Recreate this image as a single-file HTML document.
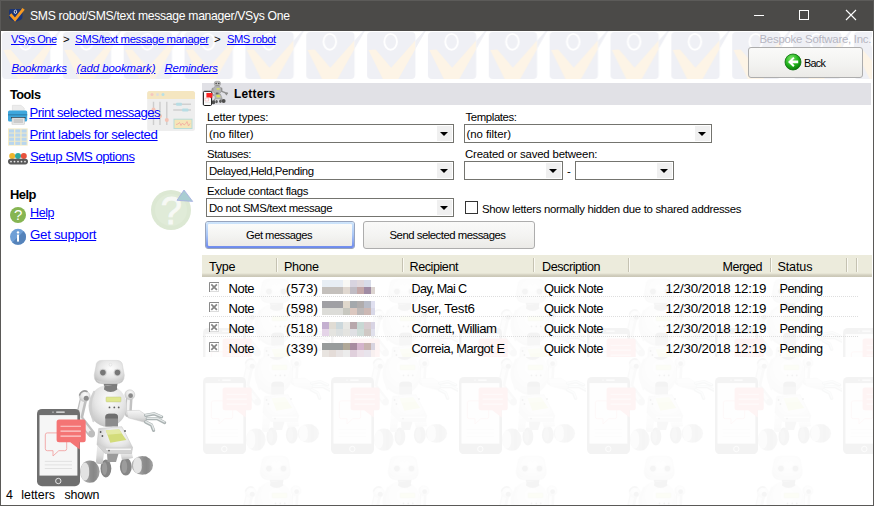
<!DOCTYPE html>
<html lang="en">
<head>
<meta charset="utf-8">
<title>SMS robot/SMS/text message manager/VSys One</title>
<style>
html,body{margin:0;padding:0;}
body{width:874px;height:506px;overflow:hidden;background:#fff;font-family:"Liberation Sans","DejaVu Sans",sans-serif;color:#000;}
#win{position:relative;width:874px;height:506px;overflow:hidden;background:#fff;}
.abs{position:absolute;}
.t{position:absolute;white-space:nowrap;line-height:16px;}
.t.u{text-decoration:underline;color:#0000ff;cursor:pointer;}
svg{position:absolute;overflow:visible;}
#titlebar{left:0;top:0;width:874px;height:31px;background:#4b4a48;border-top:1px solid #5c5b59;box-sizing:border-box;}
#bl{left:0;top:0;width:1px;height:506px;background:#5a5957;}
#br{left:873px;top:0;width:1px;height:506px;background:#5a5957;}
#bb{left:0;top:505px;width:874px;height:1px;background:#5a5957;}
.combo{position:absolute;height:18px;border:1px solid #74746f;background:#fff;box-sizing:border-box;height:19px;}
.combo b{position:absolute;right:1px;top:1px;width:15px;height:15px;background:#f0f0f0;}
.combo i{position:absolute;right:5px;top:7px;width:0;height:0;border-left:4px solid transparent;border-right:4px solid transparent;border-top:4px solid #000;}
.btn{position:absolute;border:1px solid #adadad;border-radius:3px;background:linear-gradient(#fafaf9,#f3f3f1 55%,#ebeae7);box-sizing:border-box;}
.btn.f{border-color:#98a4bd;overflow:hidden;}
.btn.f .g{position:absolute;left:0;top:0;right:0;bottom:0;background:linear-gradient(#cfe6fc,#a9c6f6 50%,#6c88ec);}
.btn.f .in{position:absolute;left:2px;top:2px;right:2px;bottom:2px;border-radius:1px;background:linear-gradient(#fbfbfa,#f3f3f1 55%,#eceae7);}
#lhead{left:202px;top:255px;width:670px;height:22px;background:linear-gradient(#ecebdc 0,#ecebdc 18px,#e0dece 19px,#d3d0c0 20px,#c9c6b5 22px);}
.sep{position:absolute;top:258px;width:1px;height:14px;background:#c5c2b2;border-right:1px solid #fbfaf3;}
.rl{position:absolute;left:203px;width:656px;height:1px;background:repeating-linear-gradient(90deg,#dedede 0,#dedede 1px,transparent 1px,transparent 2px);}
.cb{position:absolute;left:209px;width:9px;height:9px;border:1px solid;border-color:#8c8c8c #dedede #dedede #8c8c8c;background:#fff;}
</style>
</head>
<body>
<div id="win">
<svg width="0" height="0" style="left:0;top:0">
 <defs>
  <linearGradient id="gMetal" x1="0" y1="0" x2="1" y2="1">
   <stop offset="0" stop-color="#fafafa"/><stop offset="0.55" stop-color="#e2e2e2"/><stop offset="1" stop-color="#bdbdbd"/>
  </linearGradient>
  <linearGradient id="gMetal2" x1="0" y1="0" x2="1" y2="0">
   <stop offset="0" stop-color="#f2f2f2"/><stop offset="1" stop-color="#c4c4c4"/>
  </linearGradient>
  <linearGradient id="gTire" x1="0" y1="0" x2="1" y2="0">
   <stop offset="0" stop-color="#b4b4b4"/><stop offset="0.45" stop-color="#9a9a9a"/><stop offset="0.7" stop-color="#858585"/><stop offset="1" stop-color="#a2a2a2"/>
  </linearGradient>
  <radialGradient id="gBody" cx="0.55" cy="0.35" r="0.75">
   <stop offset="0" stop-color="#fdfdfd"/><stop offset="0.5" stop-color="#e6e6e6"/><stop offset="0.8" stop-color="#cccccc"/><stop offset="1" stop-color="#b2b2b2"/>
  </radialGradient>
  <linearGradient id="gMetalV" x1="0" y1="0" x2="0" y2="1">
   <stop offset="0" stop-color="#f6f6f6"/><stop offset="0.6" stop-color="#dddddd"/><stop offset="1" stop-color="#bdbdbd"/>
  </linearGradient>
  <radialGradient id="gBack" cx="0.4" cy="0.3" r="0.7">
   <stop offset="0" stop-color="#7fe86a"/><stop offset="0.6" stop-color="#22b31e"/><stop offset="1" stop-color="#0b7d0b"/>
  </radialGradient>
  <symbol id="robot" viewBox="0 0 128 128" overflow="visible">
   <!-- back wheels -->
   <ellipse cx="69.9" cy="110.5" rx="5.4" ry="8.9" fill="#848484"/>
   <ellipse cx="68.6" cy="110.5" rx="2.6" ry="6.4" fill="#9a9a9a"/>
   <ellipse cx="89.8" cy="108.7" rx="5.9" ry="8.9" fill="#868686"/>
   <ellipse cx="88.4" cy="108.7" rx="2.8" ry="6.6" fill="#9c9c9c"/>
   <!-- legs / struts -->
   <path d="M61.5 84 L60 103 Q60 106 63 106 L66.5 106 L68.5 92 Z" fill="url(#gMetalV)"/>
   <path d="M71 94 L71.5 104 L80 104 L83 94 Z" fill="#9b9b9b"/>
   <path d="M84 94 L86 102 L97 100 L95.6 93 Z" fill="url(#gMetalV)"/>
   <!-- left arm -->
   <path d="M47.3 42 L43.2 60 L54.8 75" fill="none" stroke="#bfbfbf" stroke-width="7.6" stroke-linecap="round" stroke-linejoin="round"/>
   <path d="M46.6 42 L42.6 59.6 L54 74.4" fill="none" stroke="#efefef" stroke-width="3.6" stroke-linecap="round" stroke-linejoin="round"/>
   <circle cx="55.6" cy="76" r="3.4" fill="#bdbdbd"/>
   <!-- right arm -->
   <path d="M93.2 41 L92.3 56" fill="none" stroke="#c2c2c2" stroke-width="6.6" stroke-linecap="round"/>
   <path d="M92.6 41 L91.8 55.5" fill="none" stroke="#f3f3f3" stroke-width="2.8" stroke-linecap="round"/>
   <path d="M90.6 52.6 L103.3 52.4 L111.4 57.8 L109.8 64.6 L92.2 59.8 Z" fill="url(#gMetalV)" stroke="#c6c6c6" stroke-width="0.5" stroke-linejoin="round"/>
   <path d="M109.6 57.3 L118 55.8 L125.6 58.9 M111.2 60.7 L121 60.6 L128.6 64.6 M109.6 64 L115.5 67 L117.6 72.4" fill="none" stroke="#aab2b2" stroke-width="3.2" stroke-linecap="round" stroke-linejoin="round"/>
   <path d="M109.6 57 L118 55.4 L125.4 58.4 M111.2 60.3 L121 60.1 L128.4 64 M109.8 63.6 L115.8 66.6 L117.8 71.8" fill="none" stroke="#e3e7e7" stroke-width="1.4" stroke-linecap="round" stroke-linejoin="round"/>
   <!-- neck -->
   <path d="M69.5 23 H79.8 Q81.8 23 81.6 25 L80.6 31.6 Q80.3 33.8 78 33.8 H71 Q68.8 33.8 68.5 31.6 L67.6 25 Q67.4 23 69.5 23 Z" fill="#787878"/>
   <!-- torso -->
   <ellipse cx="71.6" cy="48" rx="19" ry="20.8" fill="url(#gBody)"/>
   <path d="M58 34 Q51.5 47 57.5 63" fill="none" stroke="#cdcdcd" stroke-width="2.2" stroke-linecap="round" opacity="0.8"/>
   <path d="M68 31.5 Q74.5 36.5 81.3 31.5 L80.6 27.5 H68.6 Z" fill="#7d7d7d"/>
   <circle cx="48.7" cy="38.3" r="5.4" fill="url(#gBody)" stroke="#c4c4c4" stroke-width="0.5"/>
   <circle cx="50.2" cy="40.2" r="2.5" fill="#8a8a8a"/>
   <path d="M43.6 37 A5.4 5.4 0 0 1 51 33.4" fill="none" stroke="#9c9c9c" stroke-width="1.6" stroke-linecap="round"/>
   <circle cx="93.8" cy="36.8" r="5" fill="url(#gBody)" stroke="#c4c4c4" stroke-width="0.5"/>
   <circle cx="94.6" cy="37.7" r="2.4" fill="#8a8a8a"/>
   <rect x="70" y="39" width="15" height="4.9" rx="0.8" fill="#dfe78e" stroke="#c3c987" stroke-width="0.5"/>
   <circle cx="73.5" cy="49.4" r="0.9" fill="#5c5c5c"/><circle cx="78.3" cy="49.4" r="0.9" fill="#5c5c5c"/><circle cx="82.7" cy="49.4" r="0.9" fill="#5c5c5c"/>
   <path d="M69.3 59.5 Q69.3 55.8 73 55.8 H78.6 Q82 55.8 82 59.5 V68.4 H69.3 Z" fill="#8c8c8c"/>
   <path d="M69.3 59.5 Q69.3 55.8 73 55.8 H78.6 Q82 55.8 82 59.5 V60.5 H69.3 Z" fill="#6f6f6f"/>
   <!-- pelvis -->
   <path d="M62.7 70.5 L85.9 68.7 L96.5 89.2 L95.6 95.4 L69 95.4 L61 86.5 Z" fill="url(#gBody)" stroke="#c2c2c2" stroke-width="0.5" stroke-linejoin="round"/>
   <path d="M69.8 72.2 L83.2 71.4 L90.3 82 L74.3 84.7 Z" fill="#d3dc7a"/>
   <path d="M69.8 72.2 L83.2 71.4 L86 75.6 L71.4 76.8 Z" fill="#e4eaa4"/>
   <path d="M61 86.5 L69 95.4 L95.6 95.4 L96.5 89.2 L72 89.6 Z" fill="#d2d2d2"/>
   <path d="M70 91.3 H95" stroke="#f6f6f6" stroke-width="1.4"/>
   <circle cx="64.6" cy="74" r="0.9" fill="#555"/><circle cx="66.4" cy="78" r="0.9" fill="#555"/><circle cx="89" cy="73" r="0.9" fill="#555"/><circle cx="73" cy="92.6" r="0.9" fill="#666"/>
   <!-- head -->
   <path d="M60 8 Q60 2.4 66 2.4 H80.5 Q86.5 2.4 86.6 8 L88.3 17 Q88.6 25.7 80 25.7 H66.5 Q57.9 25.7 58.2 17 Z" fill="url(#gBody)" stroke="#cfcfcf" stroke-width="0.5"/>
   <path d="M60.2 21.5 Q62 25.2 66.5 25.4 H80 Q84.5 25.2 86.3 21.5 Q82 23.6 73.2 23.6 Q64.5 23.6 60.2 21.5 Z" fill="#cfcfcf"/>
   <circle cx="66.9" cy="14.6" r="3.9" fill="#d4d4d4"/>
   <circle cx="81.5" cy="14.6" r="3.9" fill="#d4d4d4"/>
   <circle cx="66.9" cy="14.6" r="2.8" fill="#767676"/>
   <circle cx="81.5" cy="14.6" r="2.8" fill="#767676"/>
   <circle cx="74.5" cy="6.7" r="1.4" fill="#f6f6f6" stroke="#d6d6d6" stroke-width="0.5"/>
   <!-- front wheels -->
   <ellipse cx="106.3" cy="107.3" rx="10.7" ry="9.4" fill="url(#gTire)"/>
   <ellipse cx="101.6" cy="107.3" rx="4.6" ry="8" fill="#e4e4e4"/>
   <ellipse cx="109.5" cy="107.3" rx="4" ry="9.2" fill="#8a8a8a" opacity="0.55"/>
   <ellipse cx="53.8" cy="113.6" rx="9.8" ry="11.1" fill="url(#gTire)"/>
   <ellipse cx="49" cy="113.6" rx="4.4" ry="9" fill="#e2e2e2"/>
   <ellipse cx="57" cy="113.6" rx="3.8" ry="10.8" fill="#8a8a8a" opacity="0.55"/>
   <!-- phone -->
   <rect x="1" y="50.9" width="43" height="77.4" rx="5" fill="#6f6f6f"/>
   <rect x="3.5" y="57.1" width="37.9" height="60.5" fill="#f6f6f6"/>
   <rect x="20" y="53.4" width="8.9" height="1.4" rx="0.7" fill="#f0f0f0"/>
   <circle cx="17" cy="54.1" r="0.7" fill="#f0f0f0"/>
   <circle cx="22.3" cy="123" r="2.7" fill="none" stroke="#f0f0f0" stroke-width="0.9"/>
   <path d="M8.8 103.4H36M8.8 106.9H36M8.8 110.5H36" stroke="#dcdcdc" stroke-width="0.8"/>
   <path d="M11.3 74.9 H28.7 Q30.7 74.9 30.7 76.9 V90.7 Q30.7 92.7 28.7 92.7 H22.8 L17 98 V92.7 H11.3 Q9.3 92.7 9.3 90.7 V76.9 Q9.3 74.9 11.3 74.9 Z" fill="none" stroke="#f2a4a4" stroke-width="0.9"/>
   <path d="M23.1 61.6 H47.2 Q49.7 61.6 49.7 64.1 V81.8 Q49.7 84.3 47.2 84.3 H43.7 V91.5 L34.3 84.3 H23.1 Q20.6 84.3 20.6 81.8 V64.1 Q20.6 61.6 23.1 61.6 Z" fill="#f47474"/>
   <path d="M24.5 68.3H44.9M24.5 73.1H44.9M24.5 78.1H44.9" stroke="#fbd0d0" stroke-width="1.1"/>
  </symbol>
  <pattern id="wmRows" x="202" y="277" width="128" height="128" patternUnits="userSpaceOnUse">
   <use href="#robot" x="0" y="0" width="128" height="128"/>
  </pattern>
  <pattern id="wmBelow" x="202" y="326" width="128" height="128" patternUnits="userSpaceOnUse">
   <use href="#robot" x="0" y="0" width="128" height="128"/>
  </pattern>
  <pattern id="wmTop" x="2" y="31" width="60.85" height="60" patternUnits="userSpaceOnUse">
   <rect x="0" y="1" width="48.3" height="47" rx="4" fill="#eff0f5"/>
   <path d="M1.4 19.1 L8.6 18.6 L24.1 36.8 L47.9 9.7 L48.3 9.7 L48.3 18 L31.3 48 L15.8 48 Z" fill="#fdf4e6"/>
   <path d="M48.3 9.7 L55.9 1 L56.8 0 L58.6 0 L58 1 L48.3 18 Z" fill="#eff0f5"/>
   <ellipse cx="23.6" cy="10.8" rx="6.3" ry="7.9" fill="none" stroke="#ffffff" stroke-width="1.9"/>
  </pattern>
 </defs>
</svg>
<!-- header watermark band -->
<svg width="874" height="506" style="left:0;top:0" viewBox="0 0 874 506">
 <rect x="1" y="31" width="871" height="49" fill="url(#wmTop)"/>
 <!-- list watermark -->
 <g opacity="0.075">
  <rect x="202" y="277" width="671" height="80" fill="url(#wmRows)"/>
  <rect x="202" y="357" width="671" height="148" fill="url(#wmBelow)"/>
 </g>
 <!-- big robot -->
 <use href="#robot" x="36" y="358" width="128" height="128"/>
</svg>

<div class="abs" id="titlebar"></div>
<div class="abs" id="bl"></div><div class="abs" id="br"></div><div class="abs" id="bb"></div>

<!-- title icon + window controls -->
<svg width="874" height="31" style="left:0;top:0" viewBox="0 0 874 31">
 <path d="M11 9 H20.5 Q22.5 9 22.5 11 V17 Q22.5 19 20.5 20 L16.5 21.4 H15 L11 20 Q9 19 9 17 V11 Q9 9 11 9 Z" fill="#1b3575"/>
 <path d="M10.3 14.2 L15 19.6 L23.6 8.8" fill="none" stroke="#f59a23" stroke-width="2.9"/>
 <ellipse cx="15.4" cy="11.8" rx="1.2" ry="1.7" fill="none" stroke="#fff" stroke-width="0.8"/>
 <rect x="754" y="15" width="10" height="1" fill="#fff"/>
 <rect x="799.5" y="10.5" width="9" height="9" fill="none" stroke="#fff" stroke-width="1"/>
 <path d="M846 10 L856 20 M856 10 L846 20" stroke="#fff" stroke-width="1.1"/>
</svg>

<!-- back button -->
<div class="btn" style="left:748px;top:47px;width:115px;height:31px;"></div>
<svg width="20" height="20" style="left:783px;top:52px" viewBox="0 0 20 20">
 <circle cx="10" cy="10" r="8" fill="url(#gBack)" stroke="#0a6d0a" stroke-width="0.8"/>
 <path d="M5 9.9 L10.2 4.9 L11.6 6.3 L9.4 8.6 H15.2 V11.2 H9.4 L11.6 13.5 L10.2 14.9 Z" fill="#fff"/>
</svg>

<!-- left panel icons -->
<svg width="210" height="260" style="left:0;top:0" viewBox="0 0 210 260">
 <!-- printer -->
 <path d="M12.4 105.3 H21 L24.2 108 V112.3 H12.4 Z" fill="#ececec" stroke="#d6d6d6" stroke-width="0.5"/>
 <rect x="8" y="110.5" width="19.2" height="11" rx="1.5" fill="#3fa7dd"/>
 <rect x="8" y="114.2" width="19.2" height="1.2" fill="#2f7fae"/>
 <rect x="11" y="117" width="14.6" height="1.6" fill="#2c4658"/>
 <rect x="12" y="118" width="12.6" height="6.2" fill="#e9e9e9" stroke="#bdbdbd" stroke-width="0.5"/>
 <path d="M13.5 120H23M13.5 122H23" stroke="#9a9a9a" stroke-width="0.7"/>
 <!-- labels -->
 <rect x="8" y="128.4" width="19.7" height="17.2" fill="#f4ebc6"/>
 <g fill="#b9d6ee">
  <rect x="9" y="129.4" width="5" height="3.2"/><rect x="15.3" y="129.4" width="5" height="3.2"/><rect x="21.6" y="129.4" width="5" height="3.2"/>
  <rect x="9" y="133.5" width="5" height="3.2"/><rect x="15.3" y="133.5" width="5" height="3.2"/><rect x="21.6" y="133.5" width="5" height="3.2"/>
  <rect x="9" y="137.6" width="5" height="3.2"/><rect x="15.3" y="137.6" width="5" height="3.2"/><rect x="21.6" y="137.6" width="5" height="3.2"/>
  <rect x="9" y="141.7" width="5" height="3.2"/><rect x="15.3" y="141.7" width="5" height="3.2"/><rect x="21.6" y="141.7" width="5" height="3.2"/>
 </g>
 <!-- sms options -->
 <circle cx="12.2" cy="156" r="3" fill="#efb52c"/><circle cx="18" cy="156" r="3" fill="#2fa8a1"/><circle cx="23.8" cy="156" r="3" fill="#e8523c"/>
 <rect x="8" y="158.8" width="20" height="5.6" rx="2.8" fill="#5a5a5a"/>
 <g fill="#e8e8e8"><circle cx="11" cy="161.6" r="0.9"/><circle cx="14.5" cy="161.6" r="0.9"/><circle cx="18" cy="161.6" r="0.9"/><circle cx="21.5" cy="161.6" r="0.9"/><circle cx="25" cy="161.6" r="0.9"/></g>
 <!-- help -->
 <circle cx="18" cy="215" r="8" fill="#86b552"/>
 <text x="18.2" y="220.4" text-anchor="middle" font-family="Liberation Sans, sans-serif" font-size="15" fill="#fff">?</text>
 <!-- info -->
 <circle cx="18" cy="236.8" r="8" fill="#6f9fd6"/>
 <path d="M23.66 231.14 A8 8 0 0 1 12.34 242.46 Z" fill="#5583ba"/>
 <circle cx="18" cy="232.4" r="1.2" fill="#fff"/>
 <rect x="17" y="234.6" width="2" height="7" fill="#fff"/>
 <!-- faded tools image -->
 <g>
  <rect x="147.2" y="90.9" width="47.8" height="40.1" rx="2.5" fill="#eeeeee"/>
  <path d="M147.2 99 V93.4 Q147.2 90.9 149.7 90.9 H192.5 Q195 90.9 195 93.4 V99 Z" fill="#f5e6c0"/>
  <circle cx="152" cy="94.6" r="1.5" fill="#f5c6c0"/><circle cx="157.5" cy="94.6" r="1.5" fill="#dedede"/><circle cx="163" cy="94.6" r="1.5" fill="#b8e0e6"/>
  <path d="M153.5 101.7V125M160 101.7V125M166.8 101.7V125" stroke="#cdcdcd" stroke-width="1.4"/>
  <circle cx="153.5" cy="109.5" r="2" fill="#f5c3b5"/><circle cx="160" cy="116" r="2" fill="#f5c3b5"/><circle cx="166.8" cy="120" r="2" fill="#f5c3b5"/>
  <path d="M173.2 104.2H191M173.2 110H191" stroke="#d0d0d0" stroke-width="1.4"/>
  <rect x="176" y="102.7" width="6" height="3" rx="1" fill="#b8dde4"/><rect x="182" y="108.5" width="6.5" height="3" rx="1" fill="#b8dde4"/>
  <rect x="174" y="119.2" width="18" height="9.3" fill="#f5e6b8" stroke="#b8dcd8" stroke-width="1"/>
  <path d="M176 124.5 L178 124 L179.5 122.5 L181 125.5 L182.5 123 L184 125 L185.5 124 L187 121.5 L188.5 126 L190 123.5" fill="none" stroke="#f2a8a0" stroke-width="0.8"/>
 </g>
 <!-- faded help image -->
 <circle cx="171" cy="210" r="20" fill="#dce8d3"/>
 <circle cx="171" cy="210" r="16" fill="#e0ebd8"/>
 <text x="171.2" y="223.8" text-anchor="middle" font-family="Liberation Sans, sans-serif" font-size="38" fill="#f7f9f5" stroke="#f7f9f5" stroke-width="0.8">?</text>
 <path d="M184 190 L177 200.3 L192.7 201.4 Z" fill="#a9cdd2" stroke="#a3abe2" stroke-width="0.8"/>
</svg>

<!-- Letters band -->
<div class="abs" style="left:202px;top:83px;width:669px;height:22px;background:#e1e1e6;"></div>
<svg width="28" height="26" style="left:202px;top:80px" viewBox="202 80 28 26">
 <!-- small robot icon -->
 <rect x="214.3" y="81.3" width="6.2" height="4.6" rx="1.8" fill="#bdbdbd" stroke="#8e8e8e" stroke-width="0.5"/>
 <circle cx="216.1" cy="83.6" r="0.75" fill="#3c3c3c"/><circle cx="218.8" cy="83.6" r="0.75" fill="#3c3c3c"/>
 <rect x="216.3" y="85.6" width="2.4" height="1.6" fill="#5c5c5c"/>
 <ellipse cx="217.2" cy="90" rx="4.3" ry="4.2" fill="#b4b4b4" stroke="#8c8c8c" stroke-width="0.5"/>
 <rect x="216.6" y="88.2" width="3" height="1.4" fill="#d9e25e"/>
 <path d="M212.6 88.4 L211.6 92.6 L213.4 95.4" fill="none" stroke="#9a9a9a" stroke-width="1.5" stroke-linecap="round"/>
 <path d="M221.6 88.2 L221.8 91.4 L225 92.6 L227.4 93.2 M225 92.6 L226.6 94.6" fill="none" stroke="#8f8f8f" stroke-width="1.4" stroke-linecap="round" stroke-linejoin="round"/>
 <rect x="215.9" y="92.6" width="2.6" height="2.4" fill="#5a5a5a"/>
 <path d="M214.4 94.4 L220.4 94 L222.2 98.6 L215.4 99 Z" fill="#b7b7b7" stroke="#8c8c8c" stroke-width="0.5"/>
 <path d="M216 95 L219.4 94.8 L220.6 97 L217 97.4 Z" fill="#d5de5a"/>
 <path d="M214.8 98.8 L214.2 101 M221 98.6 L222 100.4" stroke="#9c9c9c" stroke-width="1.4"/>
 <ellipse cx="213.4" cy="102.2" rx="1.9" ry="2" fill="#4e4e4e"/>
 <ellipse cx="216.6" cy="101.6" rx="1.2" ry="1.7" fill="#5a5a5a"/>
 <ellipse cx="220.4" cy="101.3" rx="1.3" ry="1.7" fill="#5a5a5a"/>
 <ellipse cx="223.6" cy="101" rx="2" ry="1.9" fill="#4e4e4e"/>
 <rect x="203.4" y="91.3" width="8.2" height="14.2" rx="1.3" fill="#fbfbfb" stroke="#161616" stroke-width="1"/>
 <path d="M205 98.2 H208.6 V101 H205 Z" fill="none" stroke="#f3a5a5" stroke-width="0.5"/>
 <path d="M205 102.6 H210" stroke="#d8d8d8" stroke-width="0.5"/>
 <path d="M206.4 93 H212.4 V97.4 H211.4 V98.6 L209.8 97.4 H206.4 Z" fill="#fb2424"/>
</svg>

<!-- combos -->
<div class="combo" style="left:206px;top:124px;width:248px;"><b></b><i></i></div>
<div class="combo" style="left:464px;top:124px;width:248px;"><b></b><i></i></div>
<div class="combo" style="left:206px;top:161px;width:248px;"><b></b><i></i></div>
<div class="combo" style="left:464px;top:161px;width:99px;"><b></b><i></i></div>
<div class="combo" style="left:575px;top:161px;width:99px;"><b></b><i></i></div>
<div class="combo" style="left:206px;top:198px;width:248px;"><b></b><i></i></div>
<div class="abs" style="left:465px;top:201px;width:13px;height:13px;border:1px solid #333;background:#fff;box-sizing:border-box;"></div>

<!-- buttons -->
<div class="btn f" style="left:205px;top:221px;width:150px;height:28px;"><div class="g"></div><div class="in"></div></div>
<div class="btn" style="left:363px;top:221px;width:172px;height:28px;"></div>

<!-- list header -->
<div class="abs" id="lhead"></div>
<div class="sep" style="left:276px;"></div>
<div class="sep" style="left:402px;"></div>
<div class="sep" style="left:533px;"></div>
<div class="sep" style="left:628px;"></div>
<div class="sep" style="left:770px;"></div>
<div class="sep" style="left:846px;"></div>
<div class="sep" style="left:856px;"></div>

<!-- row lines -->
<div class="rl" style="top:296px;"></div>
<div class="rl" style="top:316px;"></div>
<div class="rl" style="top:336px;"></div>

<!-- row check icons -->
<svg width="20" height="90" style="left:205px;top:277px" viewBox="205 277 20 90">
 <g id="cbx">
  <rect x="209.5" y="282.5" width="9" height="9" fill="#fff" stroke="#dcdcdc" stroke-width="1"/>
  <path d="M209.5 292 V282.5 H219" fill="none" stroke="#8a8a8a" stroke-width="1"/>
  <path d="M211.3 284.3 L216.9 289.9 M216.9 284.3 L211.3 289.9" stroke="#858585" stroke-width="1.7"/>
 </g>
 <use href="#cbx" y="20"/><use href="#cbx" y="40"/><use href="#cbx" y="60"/>
</svg>

<!-- redacted mosaic -->
<svg width="60" height="90" style="left:320px;top:277px" viewBox="320 277 60 90" shape-rendering="crispEdges">
<rect x="322" y="280" width="7" height="7" fill="#e8eef4"/><rect x="322" y="287" width="7" height="7" fill="#c4c0bc"/>
<rect x="329" y="280" width="7" height="7" fill="#e8eef4"/><rect x="329" y="287" width="7" height="7" fill="#c4c0bc"/>
<rect x="336" y="280" width="7" height="7" fill="#e8eef4"/><rect x="336" y="287" width="7" height="7" fill="#c4c0bc"/>
<rect x="343" y="280" width="7" height="7" fill="#f8f8f4"/><rect x="343" y="287" width="7" height="7" fill="#e0d8d0"/>
<rect x="350" y="280" width="7" height="7" fill="#d8d4e0"/><rect x="350" y="287" width="7" height="7" fill="#c0bcc4"/>
<rect x="357" y="280" width="7" height="7" fill="#e0d8dc"/><rect x="357" y="287" width="7" height="7" fill="#c4a8a8"/>
<rect x="364" y="280" width="7" height="7" fill="#d8dce8"/><rect x="364" y="287" width="7" height="7" fill="#a08ca4"/>
<rect x="371" y="280" width="3.6" height="7" fill="#ffffff"/><rect x="371" y="287" width="3.6" height="7" fill="#dcd4d0"/>
<rect x="322" y="301" width="7" height="7" fill="#a0a0a4"/><rect x="322" y="308" width="7" height="7" fill="#dcdcd8"/>
<rect x="329" y="301" width="7" height="7" fill="#a0a0a4"/><rect x="329" y="308" width="7" height="7" fill="#dcdcd8"/>
<rect x="336" y="301" width="7" height="7" fill="#a0a0a4"/><rect x="336" y="308" width="7" height="7" fill="#dcdcd8"/>
<rect x="343" y="301" width="7" height="7" fill="#e0d8cc"/><rect x="343" y="308" width="7" height="7" fill="#c8c8c0"/>
<rect x="350" y="301" width="7" height="7" fill="#a4a8ac"/><rect x="350" y="308" width="7" height="7" fill="#dcc8c0"/>
<rect x="357" y="301" width="7" height="7" fill="#b0acac"/><rect x="357" y="308" width="7" height="7" fill="#bcb8b8"/>
<rect x="364" y="301" width="7" height="7" fill="#b8bcc8"/><rect x="364" y="308" width="7" height="7" fill="#ccb8b4"/>
<rect x="371" y="301" width="3.6" height="7" fill="#e0e0f0"/><rect x="371" y="308" width="3.6" height="7" fill="#d8d8e8"/>
<rect x="322" y="322" width="7" height="7" fill="#c4b0d0"/><rect x="322" y="329" width="7" height="7" fill="#e4d4e8"/>
<rect x="329" y="322" width="7" height="7" fill="#e0dcd4"/><rect x="329" y="329" width="7" height="7" fill="#e4e4e0"/>
<rect x="336" y="322" width="7" height="7" fill="#ccd8dc"/><rect x="336" y="329" width="7" height="7" fill="#dce0e0"/>
<rect x="343" y="322" width="7" height="7" fill="#e8e8e4"/><rect x="343" y="329" width="7" height="7" fill="#e4e4e0"/>
<rect x="350" y="322" width="7" height="7" fill="#b8a8ac"/><rect x="350" y="329" width="7" height="7" fill="#e0e0e4"/>
<rect x="357" y="322" width="7" height="7" fill="#c8d8d4"/><rect x="357" y="329" width="7" height="7" fill="#d0dcd8"/>
<rect x="364" y="322" width="7" height="7" fill="#d8ccd0"/><rect x="364" y="329" width="7" height="7" fill="#d0c8c4"/>
<rect x="371" y="322" width="3.6" height="7" fill="#d8d4e4"/><rect x="371" y="329" width="3.6" height="7" fill="#e0e0ec"/>
<rect x="322" y="343" width="7" height="7" fill="#989c9c"/><rect x="322" y="350" width="7" height="7" fill="#e8e4e0"/>
<rect x="329" y="343" width="7" height="7" fill="#989c9c"/><rect x="329" y="350" width="7" height="7" fill="#e4dcd8"/>
<rect x="336" y="343" width="7" height="7" fill="#989c9c"/><rect x="336" y="350" width="7" height="7" fill="#e8e4e4"/>
<rect x="343" y="343" width="7" height="7" fill="#b0a898"/><rect x="343" y="350" width="7" height="7" fill="#ececec"/>
<rect x="350" y="343" width="7" height="7" fill="#a88ca0"/><rect x="350" y="350" width="7" height="7" fill="#e0d0dc"/>
<rect x="357" y="343" width="7" height="7" fill="#d4b4cc"/><rect x="357" y="350" width="7" height="7" fill="#ece0e8"/>
<rect x="364" y="343" width="7" height="7" fill="#c8b4b0"/><rect x="364" y="350" width="7" height="7" fill="#e8e4ec"/>
<rect x="371" y="343" width="3.6" height="7" fill="#d8d4e0"/><rect x="371" y="350" width="3.6" height="7" fill="#f8f0f0"/>
</svg>
<div class="t" id="title" style="left:30.0px;top:8px;line-height:16px;font-size:12.2px;letter-spacing:-0.309px;color:#fff;">SMS robot/SMS/text message manager/VSys One</div>
<div class="t u" id="c1" style="left:11.0px;top:32px;line-height:14px;font-size:11.0px;letter-spacing:-0.504px;">VSys One</div>
<div class="t" id="c1g" style="left:63.0px;top:32px;line-height:14px;font-size:11.4px;letter-spacing:0.000px;">&gt;</div>
<div class="t u" id="c2" style="left:75.0px;top:32px;line-height:14px;font-size:11.4px;letter-spacing:-0.423px;">SMS/text message manager</div>
<div class="t" id="c2g" style="left:214.0px;top:32px;line-height:14px;font-size:11.4px;letter-spacing:0.000px;">&gt;</div>
<div class="t u" id="c3" style="left:227.0px;top:32px;line-height:14px;font-size:11.23px;letter-spacing:-0.500px;">SMS robot</div>
<div class="t" id="bsp" style="left:759.5px;top:32px;line-height:14px;font-size:11.4px;letter-spacing:-0.245px;color:#b6b6c2;">Bespoke Software, Inc.</div>
<div class="t u" id="b1" style="left:11.5px;top:61px;line-height:14px;font-size:11.4px;letter-spacing:-0.186px;font-style:italic;">Bookmarks</div>
<div class="t u" id="b2" style="left:76.5px;top:61px;line-height:14px;font-size:11.4px;letter-spacing:-0.060px;font-style:italic;">(add bookmark)</div>
<div class="t u" id="b3" style="left:164.5px;top:61px;line-height:14px;font-size:11.4px;letter-spacing:-0.197px;font-style:italic;">Reminders</div>
<div class="t" id="back" style="left:804.0px;top:56px;line-height:14px;font-size:10.77px;letter-spacing:-0.713px;">Back</div>
<div class="t" id="hTools" style="left:10.0px;top:86px;line-height:17px;font-size:12.73px;letter-spacing:-0.496px;font-weight:bold;">Tools</div>
<div class="t u" id="l1" style="left:29.5px;top:104px;line-height:17px;font-size:13.04px;letter-spacing:-0.499px;">Print selected messages</div>
<div class="t u" id="l2" style="left:29.5px;top:126px;line-height:17px;font-size:13.3px;letter-spacing:-0.405px;">Print labels for selected</div>
<div class="t u" id="l3" style="left:30.0px;top:148px;line-height:17px;font-size:13.2px;letter-spacing:-0.494px;">Setup SMS options</div>
<div class="t" id="hHelp" style="left:10.0px;top:186px;line-height:17px;font-size:12.92px;letter-spacing:-0.490px;font-weight:bold;">Help</div>
<div class="t u" id="l4" style="left:30.0px;top:205px;line-height:16px;font-size:12.64px;letter-spacing:-0.490px;">Help</div>
<div class="t u" id="l5" style="left:30.0px;top:226px;line-height:17px;font-size:13.3px;letter-spacing:-0.298px;">Get support</div>
<div class="t" id="letters" style="left:234.0px;top:86px;line-height:16px;font-size:11.9px;letter-spacing:0.224px;font-weight:bold;">Letters</div>
<div class="t" id="f1" style="left:207.0px;top:110px;line-height:14px;font-size:11.4px;letter-spacing:-0.099px;">Letter types:</div>
<div class="t" id="v1" style="left:209.0px;top:127px;line-height:14px;font-size:11.4px;letter-spacing:-0.045px;">(no filter)</div>
<div class="t" id="f2" style="left:465.5px;top:110px;line-height:14px;font-size:11.4px;letter-spacing:-0.398px;">Templates:</div>
<div class="t" id="v2" style="left:466.5px;top:127px;line-height:14px;font-size:11.4px;letter-spacing:-0.045px;">(no filter)</div>
<div class="t" id="f3" style="left:207.0px;top:147px;line-height:14px;font-size:11.4px;letter-spacing:-0.375px;">Statuses:</div>
<div class="t" id="v3" style="left:209.0px;top:164px;line-height:14px;font-size:11.4px;letter-spacing:-0.440px;">Delayed,Held,Pending</div>
<div class="t" id="f4" style="left:465.0px;top:147px;line-height:14px;font-size:11.4px;letter-spacing:-0.178px;">Created or saved between:</div>
<div class="t" id="dash" style="left:567.0px;top:164px;line-height:14px;font-size:11.4px;letter-spacing:0.000px;">-</div>
<div class="t" id="f5" style="left:207.0px;top:184px;line-height:14px;font-size:11.4px;letter-spacing:-0.307px;">Exclude contact flags</div>
<div class="t" id="v5" style="left:209.0px;top:201px;line-height:14px;font-size:11.4px;letter-spacing:-0.401px;">Do not SMS/text message</div>
<div class="t" id="chk" style="left:482.0px;top:202px;line-height:14px;font-size:11.4px;letter-spacing:-0.300px;">Show letters normally hidden due to shared addresses</div>
<div class="t" id="bt1" style="left:246.0px;top:228px;line-height:14px;font-size:11.17px;letter-spacing:-0.494px;">Get messages</div>
<div class="t" id="bt2" style="left:389.5px;top:228px;line-height:14px;font-size:11.37px;letter-spacing:-0.497px;">Send selected messages</div>
<div class="t" id="h1" style="left:209.0px;top:259px;line-height:16px;font-size:12.6px;letter-spacing:-0.271px;">Type</div>
<div class="t" id="h2" style="left:284.0px;top:259px;line-height:16px;font-size:12.6px;letter-spacing:-0.355px;">Phone</div>
<div class="t" id="h3" style="left:409.5px;top:259px;line-height:16px;font-size:12.6px;letter-spacing:-0.439px;">Recipient</div>
<div class="t" id="h4" style="left:542.0px;top:259px;line-height:16px;font-size:12.6px;letter-spacing:-0.450px;">Description</div>
<div class="t" id="h5" style="left:722.5px;top:259px;line-height:16px;font-size:12.54px;letter-spacing:-0.500px;">Merged</div>
<div class="t" id="h6" style="left:777.5px;top:259px;line-height:16px;font-size:12.6px;letter-spacing:-0.141px;">Status</div>
<div class="t" id="r0a" style="left:228.5px;top:280px;line-height:17px;font-size:13.02px;letter-spacing:-0.500px;">Note</div>
<div class="t" id="r0b" style="left:286.0px;top:280px;line-height:17px;font-size:13.3px;letter-spacing:0.238px;">(573)</div>
<div class="t" id="r0c" style="left:411.5px;top:281px;line-height:16px;font-size:12.57px;letter-spacing:-0.634px;">Day, Mai C</div>
<div class="t" id="r0d" style="left:544.0px;top:280px;line-height:17px;font-size:12.94px;letter-spacing:-0.500px;">Quick Note</div>
<div class="t" id="r0e" style="left:665.5px;top:280px;line-height:17px;font-size:13.3px;letter-spacing:-0.169px;">12/30/2018 12:19</div>
<div class="t" id="r0f" style="left:779.5px;top:281px;line-height:16px;font-size:12.67px;letter-spacing:-0.492px;">Pending</div>
<div class="t" id="r1a" style="left:228.5px;top:300px;line-height:17px;font-size:13.02px;letter-spacing:-0.500px;">Note</div>
<div class="t" id="r1b" style="left:286.0px;top:300px;line-height:17px;font-size:13.3px;letter-spacing:0.238px;">(598)</div>
<div class="t" id="r1c" style="left:411.5px;top:300px;line-height:17px;font-size:13.3px;letter-spacing:-0.278px;">User, Test6</div>
<div class="t" id="r1d" style="left:544.0px;top:300px;line-height:17px;font-size:12.94px;letter-spacing:-0.500px;">Quick Note</div>
<div class="t" id="r1e" style="left:665.5px;top:300px;line-height:17px;font-size:13.3px;letter-spacing:-0.169px;">12/30/2018 12:19</div>
<div class="t" id="r1f" style="left:779.5px;top:301px;line-height:16px;font-size:12.67px;letter-spacing:-0.492px;">Pending</div>
<div class="t" id="r2a" style="left:228.5px;top:320px;line-height:17px;font-size:13.02px;letter-spacing:-0.500px;">Note</div>
<div class="t" id="r2b" style="left:286.0px;top:320px;line-height:17px;font-size:13.3px;letter-spacing:0.238px;">(518)</div>
<div class="t" id="r2c" style="left:411.5px;top:320px;line-height:17px;font-size:13.18px;letter-spacing:-0.497px;">Cornett, William</div>
<div class="t" id="r2d" style="left:544.0px;top:320px;line-height:17px;font-size:12.94px;letter-spacing:-0.500px;">Quick Note</div>
<div class="t" id="r2e" style="left:665.5px;top:320px;line-height:17px;font-size:13.3px;letter-spacing:-0.169px;">12/30/2018 12:19</div>
<div class="t" id="r2f" style="left:779.5px;top:321px;line-height:16px;font-size:12.67px;letter-spacing:-0.492px;">Pending</div>
<div class="t" id="r3a" style="left:228.5px;top:340px;line-height:17px;font-size:13.02px;letter-spacing:-0.500px;">Note</div>
<div class="t" id="r3b" style="left:286.0px;top:340px;line-height:17px;font-size:13.3px;letter-spacing:0.238px;">(339)</div>
<div class="t" id="r3c" style="left:411.5px;top:340px;line-height:17px;font-size:12.86px;letter-spacing:-0.499px;">Correia, Margot E</div>
<div class="t" id="r3d" style="left:544.0px;top:340px;line-height:17px;font-size:12.94px;letter-spacing:-0.500px;">Quick Note</div>
<div class="t" id="r3e" style="left:665.5px;top:340px;line-height:17px;font-size:13.3px;letter-spacing:-0.169px;">12/30/2018 12:19</div>
<div class="t" id="r3f" style="left:779.5px;top:341px;line-height:16px;font-size:12.67px;letter-spacing:-0.492px;">Pending</div>
<div class="t" id="st1" style="left:6.0px;top:487px;line-height:16px;font-size:12.4px;letter-spacing:0.000px;">4</div>
<div class="t" id="st2" style="left:21.3px;top:487px;line-height:16px;font-size:12.4px;letter-spacing:-0.008px;">letters</div>
<div class="t" id="st3" style="left:64.5px;top:487px;line-height:16px;font-size:12.4px;letter-spacing:-0.207px;">shown</div>
</div>
</body>
</html>
